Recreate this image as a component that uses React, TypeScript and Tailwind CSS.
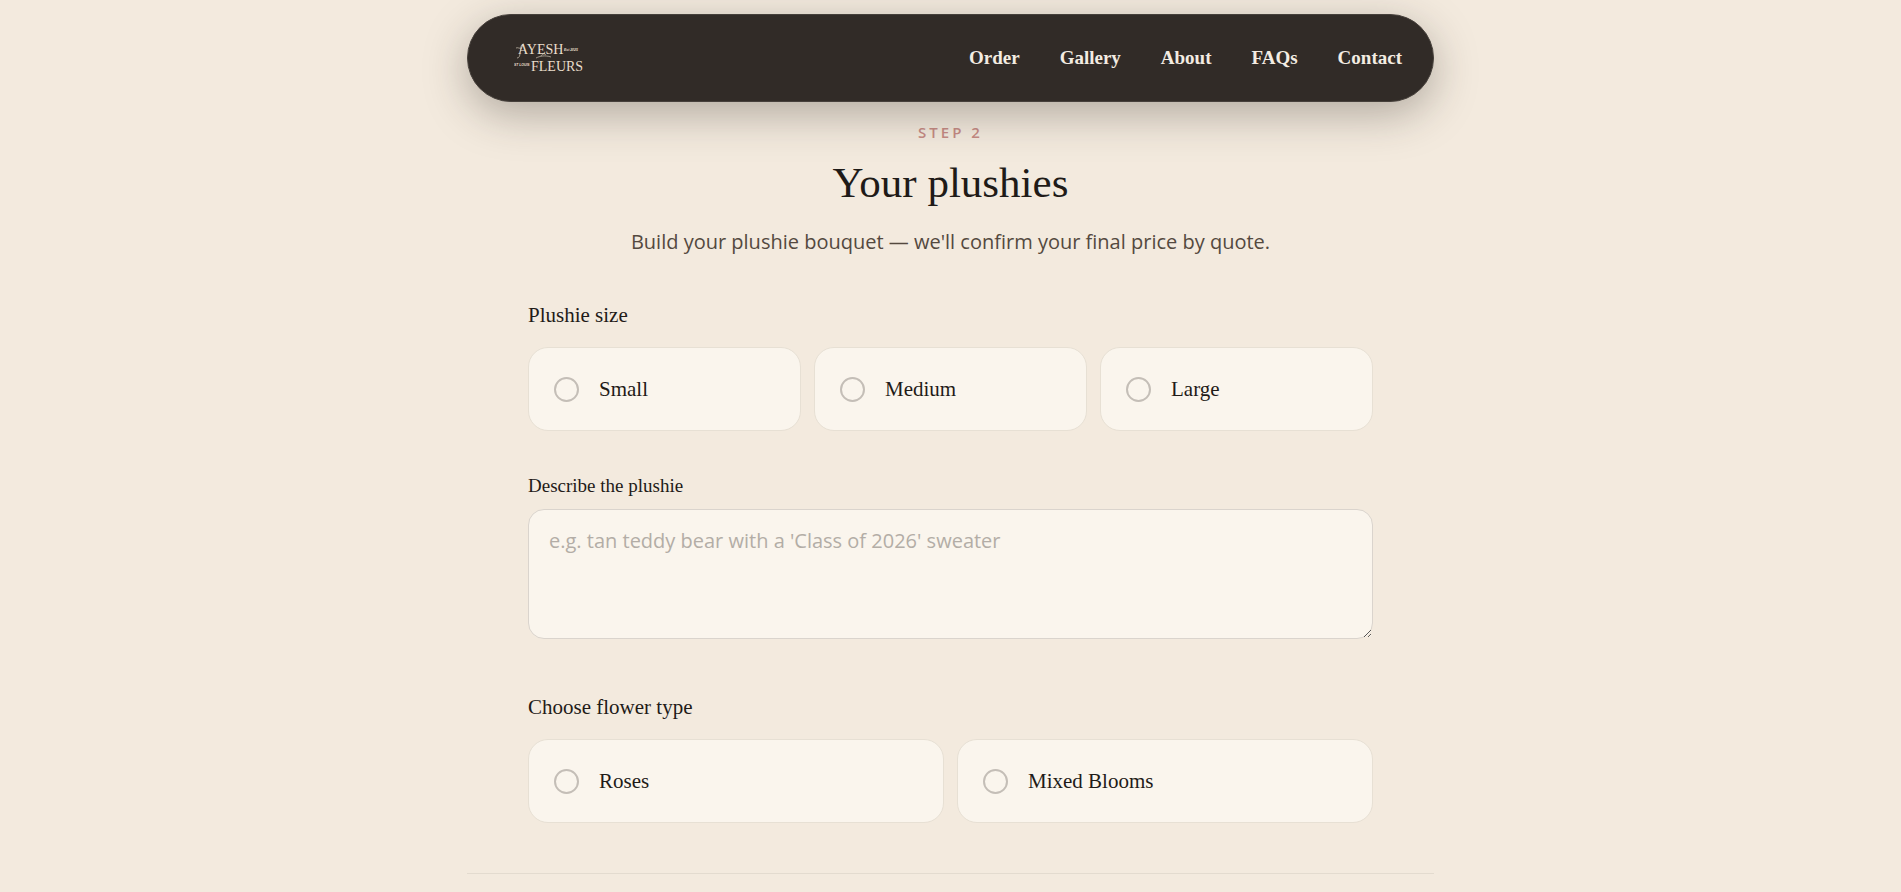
import React from "react";

const links = ["Order", "Gallery", "About", "FAQs", "Contact"];
const sizes = ["Small", "Medium", "Large"];
const flowers = ["Roses", "Mixed Blooms"];

const Logo = () => {
  return (
    <svg
      viewBox="0 0 70 36"
      className="h-9 w-[70px]"
      fill="#e9dfcc"
      fontFamily="'Liberation Serif', serif"
      role="img"
      aria-label="Ayesh Fleurs"
    >
      <text x="4" y="14" fontSize="14">
        AYESH
      </text>
      <text x="17" y="31" fontSize="14">
        FLEURS
      </text>
      <g
        fontFamily="'Liberation Sans', sans-serif"
        fontSize="3.4"
        fontStyle="italic"
        fontWeight="bold"
      >
        <text x="50" y="11">
          Est 2025
        </text>
        <text x="0" y="26">
          ST LOUIS
        </text>
      </g>
      <g fill="none" stroke="#e9dfcc" strokeWidth="0.6">
        <path d="M10 4C6 4 7 9 6 13c0 3-1 5-3 5M2 8c2-1 3 1 6 0" />
        <path d="M22 18c4-2 9-3 15-1M27 16c1-2 3-3 5-1" />
      </g>
    </svg>
  );
};

const Header = () => {
  return (
    <header className="relative z-10 mx-auto mt-3.5 flex h-[88px] w-full max-w-[967px] items-center justify-between rounded-full border border-[#46403b] bg-[#312b27] pr-[31px] pl-[46px] shadow-[0_12px_44px_rgba(49,43,39,0.34)]">
      <a href="#home">
        <Logo />
      </a>

      <nav className="flex gap-10 font-['Liberation_Serif',serif] text-[19px] font-bold text-[#f3ece2]">
        {links.map((link) => (
          <a key={link} href={`#${link.toLowerCase()}`}>
            {link}
          </a>
        ))}
      </nav>
    </header>
  );
};

type OptionGroupProps = {
  title: string;
  name: string;
  options: string[];
  columns: string;
};

const OptionGroup = ({ title, name, options, columns }: OptionGroupProps) => {
  return (
    <fieldset>
      <legend className="mb-[18px] font-['Liberation_Serif',serif] text-[21px] leading-7">
        {title}
      </legend>

      <div className={`grid gap-[13px] ${columns}`}>
        {options.map((option) => (
          <label
            key={option}
            className="flex h-[84px] cursor-pointer items-center gap-5 rounded-[20px] border border-[#e7e0d4] bg-[#faf5ed] px-[25px] font-['Liberation_Serif',serif] text-[21px] leading-7"
          >
            <input
              type="radio"
              name={name}
              value={option}
              className="size-[25px] shrink-0 appearance-none rounded-full border-2 border-[#c4beb7] checked:border-8 checked:border-[#c98d86]"
            />
            {option}
          </label>
        ))}
      </div>
    </fieldset>
  );
};

const App = () => {
  return (
    <div className="flow-root min-h-screen bg-[#f3eade] font-['Open_Sans',sans-serif] text-[#1f1b18]">
      <Header />

      <main className="mx-auto w-full max-w-[967px] border-b border-[#e3dbcf] pt-5 pb-[50px]">
        <div className="text-center">
          <p className="text-[15px] leading-5 font-semibold tracking-[0.2em] text-[#c68a84]">
            STEP 2
          </p>
          <h1 className="mt-[17px] font-['Liberation_Serif',serif] text-[43px] leading-12">
            Your plushies
          </h1>
          <p className="mt-[21px] text-xl leading-7 text-[#54493f]">
            Build your plushie bouquet — we'll confirm your final price by
            quote.
          </p>
        </div>

        <form className="mx-auto mt-[45px] max-w-[845px]">
          <OptionGroup
            title="Plushie size"
            name="size"
            options={sizes}
            columns="grid-cols-3"
          />

          <div className="mt-[43px] mb-[54px]">
            <label
              htmlFor="description"
              className="block font-['Liberation_Serif',serif] text-[19px] leading-6"
            >
              Describe the plushie
            </label>
            <textarea
              id="description"
              placeholder="e.g. tan teddy bear with a 'Class of 2026' sweater"
              className="mt-[11px] block h-[130px] w-full resize-y rounded-2xl border border-[#dad4cd] bg-[#faf5ed] px-5 py-[17px] text-xl leading-7 placeholder:text-[#b3ada6]"
            />
          </div>

          <OptionGroup
            title="Choose flower type"
            name="flower"
            options={flowers}
            columns="grid-cols-2"
          />
        </form>
      </main>
    </div>
  );
};

export default App;
